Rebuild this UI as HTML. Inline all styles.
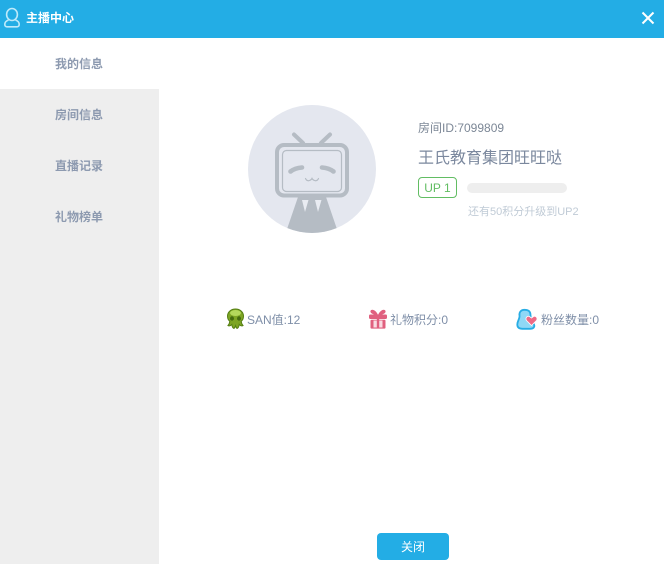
<!DOCTYPE html>
<html>
<head>
<meta charset="utf-8">
<style>
html,body{margin:0;padding:0;background:#fff}
body{width:664px;height:564px;position:relative;overflow:hidden;font-family:"Liberation Sans","WenQuanYi Zen Hei","Noto Sans CJK SC",sans-serif;font-size:12px;color:#7f8fa8}
.a{position:absolute;white-space:nowrap}
.top{left:0;top:0;width:664px;height:38px;background:#23ade5}
.side{left:0;top:38px;width:159px;height:526px;background:#eeeeee}
.tab{left:0;width:159px;height:51px;line-height:53px;font-size:12px;font-weight:bold;color:#8d9ab0;padding-left:55px;box-sizing:border-box}
.tab.on{background:#fff}
</style>
</head>
<body>
<div class="a top"></div>
<svg class="a" style="left:3px;top:7px" width="18" height="21" viewBox="0 0 18 21" fill="none" stroke="#bfeafa" stroke-width="1.600">
<ellipse cx="9" cy="7.500" rx="5.400" ry="6"/>
<path d="M5.500 13 C3 14 1.800 15 1.800 17.500 C1.800 19 2.800 19.800 4 19.800 H14 C15.200 19.800 16.200 19 16.200 17.500 C16.200 15 15 14 12.500 13"/>
</svg>
<div class="a" style="left:26px;top:10px;line-height:17px;color:#fff;font-weight:bold;font-size:12px">主播中心</div>
<svg class="a" style="left:641px;top:11px" width="14" height="14" viewBox="0 0 14 14"><path d="M1.500 1.500 L12.500 12.500 M12.500 1.500 L1.500 12.500" stroke="#fff" stroke-width="2"/></svg>

<div class="a side"></div>
<div class="a tab on" style="top:38px">我的信息</div>
<div class="a tab" style="top:89px">房间信息</div>
<div class="a tab" style="top:140px">直播记录</div>
<div class="a tab" style="top:191px">礼物榜单</div>

<svg class="a" style="left:248px;top:105px" width="128" height="128" viewBox="0 0 128 128">
<defs><clipPath id="c"><circle cx="64" cy="64" r="64"/></clipPath></defs>
<circle cx="64" cy="64" r="64" fill="#e4e7ef"/>
<g clip-path="url(#c)">
<path d="M37 130 L50 92 H78 L91 130 Z" fill="#b5bcc4"/>
<path d="M54 95 L57 107 L60.500 95 Z M67 95 L70 107 L73.500 95 Z" fill="#e9ecf2"/>
</g>
<g fill="none" stroke="#b5bcc4" stroke-linecap="round">
<path d="M46 29.500 L55 38 M82 29.500 L73 38" stroke-width="4"/>
<rect x="29" y="40" width="70" height="50.500" rx="7" stroke-width="4"/>
<rect x="34.500" y="45.500" width="59" height="41" rx="4" stroke-width="1.200"/>
<path d="M42.500 66.500 Q47 63 54 62.500 M85.500 66.500 Q81 63 74 62.500" stroke-width="4.600"/>
<path d="M57.500 73.500 q1.500 3 4 2 q2 -.8 2.500 -2 q.5 1.200 2.500 2 q2.500 1 4 -2" stroke-width="1.200"/>
</g>
</svg>

<div class="a" style="left:418px;top:120px;line-height:17px;color:#7c8796;font-size:12px">房间ID:7099809</div>
<div class="a" style="left:418px;top:148px;line-height:21px;font-size:16px;color:#7b889e">王氏教育集团旺旺哒</div>
<div class="a" style="left:418px;top:177px;width:37px;height:19px;border:1px solid #62bd63;border-radius:4px;line-height:20px;text-align:center;color:#62bd63;font-size:12px">UP 1</div>
<div class="a" style="left:467px;top:183px;width:100px;height:10px;border-radius:5px;background:#eeeeee"></div>
<div class="a" style="left:468px;top:204px;line-height:16px;font-size:11px;color:#c0cbd6">还有50积分升级到UP2</div>

<svg class="a" style="left:226px;top:308px" width="19" height="22" viewBox="0 0 19 22">
<path d="M9.500 1 C4.800 1 1.500 4.200 1.500 8 C1.500 10.500 2.500 12.300 3.800 13.300 C3.600 15 3 16.500 2 17.500 C3.500 18.300 5 17.500 5.800 16.500 C6 18.500 6.500 20 8 20.500 C8.800 19.800 9.200 18.800 9.500 17.800 C9.800 18.800 10.200 19.800 11 20.500 C12.500 20 13 18.500 13.200 16.500 C14 17.500 15.500 18.300 17 17.500 C16 16.500 15.400 15 15.200 13.300 C16.500 12.300 17.500 10.500 17.500 8 C17.500 4.200 14.200 1 9.500 1Z" fill="#7da524" stroke="#557f14" stroke-width="1"/>
<ellipse cx="9.500" cy="5" rx="5.500" ry="3" fill="#b4d85c"/>
<ellipse cx="6" cy="10.500" rx="2" ry="2.200" fill="#466c10"/><ellipse cx="13" cy="10.500" rx="2" ry="2.200" fill="#466c10"/>
</svg>
<div class="a" style="left:247px;top:312px;line-height:17px">SAN值:12</div>

<svg class="a" style="left:369px;top:309px" width="18" height="20" viewBox="0 0 18 20">
<path d="M9 6 C7 1 2.500 -.5 1.500 2 C.8 4.500 5 6 9 6 C13 6 17.200 4.500 16.500 2 C15.500 -.5 11 1 9 6Z" fill="#e0607f"/>
<rect x="0" y="5.500" width="18" height="4.500" rx="1.200" fill="#e0607f"/>
<rect x="1.500" y="10.800" width="15" height="8.800" rx="1" fill="#e0607f"/>
<rect x="4.500" y="11.500" width="9" height="7" fill="#f9dbe2"/>
<rect x="7.800" y="5.500" width="2.400" height="14" fill="#e0607f"/>
</svg>
<div class="a" style="left:390px;top:312px;line-height:17px">礼物积分:0</div>

<svg class="a" style="left:516px;top:308px" width="21" height="22" viewBox="0 0 21 22">
<path d="M8.500 1.800 C4.500 1.800 3 4.800 3.500 7.500 C4 10.500 1.300 13 1.300 16.500 C1.300 19.800 3.500 20.800 6.500 20.800 H14 C17.500 20.800 19 19 18 16.500 C16.800 14 14.500 11.500 14.500 7 C14.500 3.500 12.500 1.800 8.500 1.800Z" fill="#8fd8f6" stroke="#28ade5" stroke-width="1.800"/>
<path d="M15.500 17.500 L10.500 12.500 C9 10.200 11 7.500 13.500 8.500 L15.500 10 L17.500 8.500 C20 7.500 22 10.200 20.500 12.500Z" fill="#ee6a86" stroke="#fff" stroke-width=".8"/>
</svg>
<div class="a" style="left:541px;top:312px;line-height:17px">粉丝数量:0</div>

<div class="a" style="left:377px;top:533px;width:72px;height:27px;border-radius:4px;background:#23ade5;color:#fff;line-height:28px;text-align:center;font-size:12px">关闭</div>
</body>
</html>
